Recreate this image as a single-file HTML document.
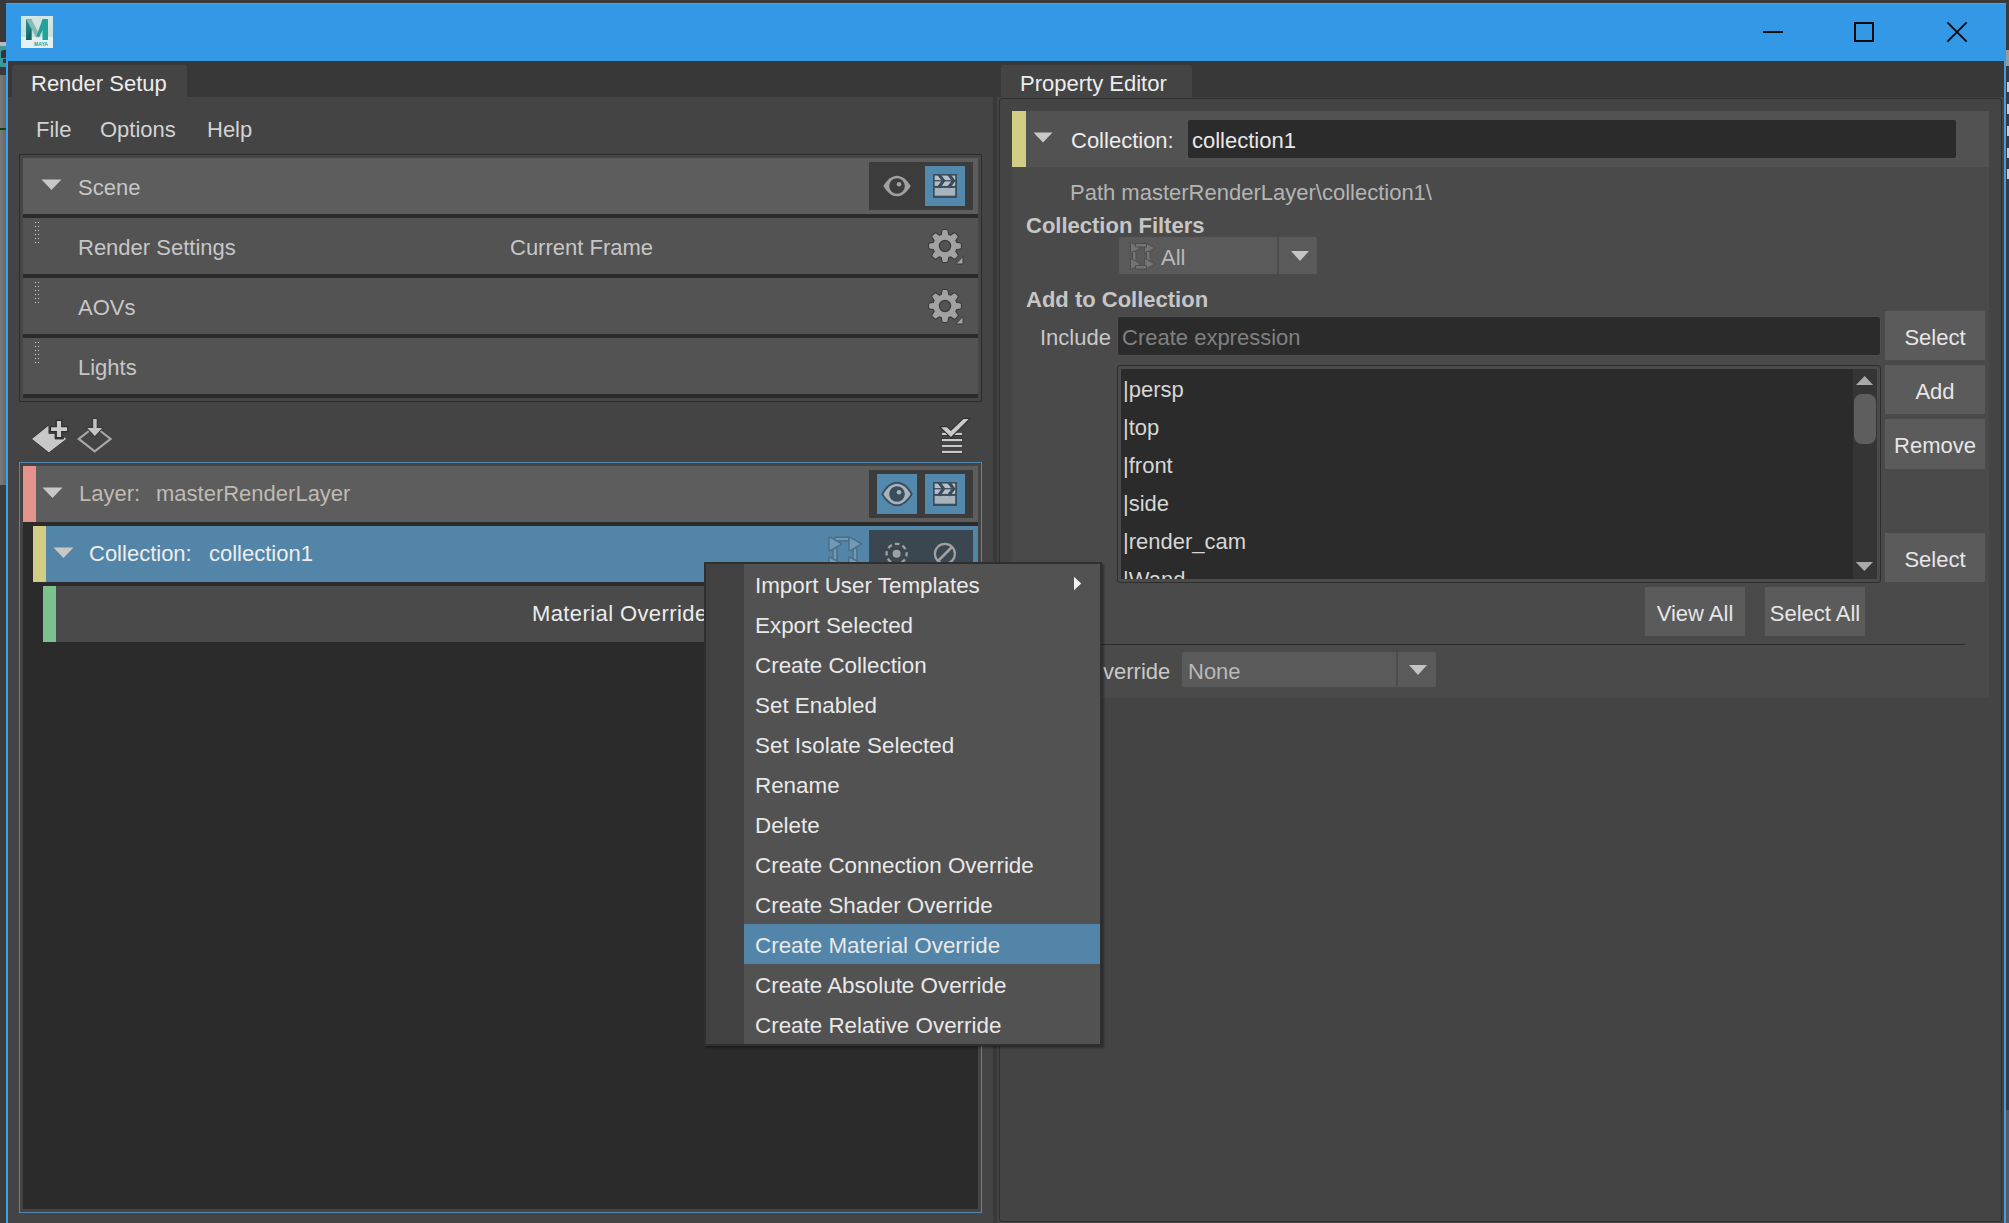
<!DOCTYPE html>
<html><head><meta charset="utf-8">
<style>
html,body{margin:0;padding:0}
body{width:2009px;height:1223px;position:relative;overflow:hidden;background:#3a3a3a;font-family:"Liberation Sans",sans-serif;}
.a{position:absolute}
.t{position:absolute;font-family:"Liberation Sans",sans-serif;font-size:22px;line-height:28px;white-space:nowrap;color:#d2d2d2}
.row{position:absolute;background:#535353}
.sep{position:absolute;background:#2b2b2b}
.btn{position:absolute;background:#5b5b5b;color:#e6e6e6;font-size:22px;line-height:26px;text-align:center;white-space:nowrap;box-sizing:border-box;padding-top:2px}
.mi{position:absolute;left:744px;width:356px;height:40px}
.mi span{position:absolute;left:11px;top:9px;font-size:22.4px;line-height:26px;color:#e8e8e8;white-space:nowrap}
.li{position:absolute;left:1123px;font-size:22px;line-height:26px;color:#d6d6d6;white-space:nowrap}
</style></head><body>
<!-- left desktop strip -->
<div class="a" style="left:0;top:0;width:6px;height:41px;background:#393939"></div>
<div class="a" style="left:0;top:42px;width:6px;height:4px;background:#b8b8b8"></div>
<div class="a" style="left:0;top:46px;width:6px;height:21px;background:#3d9898"></div>
<div class="a" style="left:1px;top:50px;width:5px;height:8px;background:#343434;border-radius:3px 0 0 0"></div>
<div class="a" style="left:3px;top:59px;width:3px;height:4px;background:#343434"></div>
<div class="a" style="left:0;top:67px;width:6px;height:8px;background:#3a3a3a"></div>
<div class="a" style="left:0;top:75px;width:6px;height:410px;background:linear-gradient(90deg,#7a7a7a,#686868)"></div>
<div class="a" style="left:0;top:128px;width:6px;height:2px;background:#0c4a0c"></div>
<div class="a" style="left:0;top:485px;width:6px;height:738px;background:#3b3b3b"></div>
<!-- right strip -->
<div class="a" style="left:2006px;top:0;width:3px;height:1223px;background:#3a3a3a"></div>
<div class="a" style="left:2006px;top:50px;width:3px;height:16px;background:#9a9a9a"></div>
<div class="a" style="left:2007px;top:82px;width:2px;height:10px;background:#cfcfcf"></div>
<div class="a" style="left:2007px;top:104px;width:2px;height:10px;background:#cfcfcf"></div>
<div class="a" style="left:2007px;top:126px;width:2px;height:10px;background:#cfcfcf"></div>
<div class="a" style="left:2007px;top:148px;width:2px;height:10px;background:#cfcfcf"></div>
<div class="a" style="left:2007px;top:169px;width:2px;height:10px;background:#cfcfcf"></div>
<div class="a" style="left:2006px;top:1110px;width:3px;height:113px;background:#5a5a5a"></div>
<!-- window blue frame -->
<div class="a" style="left:6px;top:3px;width:2000px;height:58px;background:#3399e6"></div>
<div class="a" style="left:6px;top:3px;width:2000px;height:1px;background:#4aa6ee"></div>
<div class="a" style="left:6px;top:61px;width:2px;height:1162px;background:#3da0ee"></div>
<div class="a" style="left:2004px;top:61px;width:2px;height:1162px;background:#3da0ee"></div>
<!-- content bg -->
<div class="a" style="left:8px;top:61px;width:1996px;height:1162px;background:#444444"></div>
<div class="a" style="left:8px;top:61px;width:1996px;height:36px;background:#383838"></div>
<!-- logo -->
<svg class="a" style="left:21px;top:16px" width="32" height="32" viewBox="0 0 32 32">
<defs><linearGradient id="lg1" x1="0" y1="0" x2="0" y2="1"><stop offset="0" stop-color="#d2e6e5"/><stop offset="0.65" stop-color="#c9e0df"/><stop offset="0.66" stop-color="#e4f0ef"/><stop offset="1" stop-color="#e6f1f0"/></linearGradient>
<linearGradient id="lg2" x1="0" y1="0" x2="0" y2="1"><stop offset="0" stop-color="#22928f"/><stop offset="1" stop-color="#146c6a"/></linearGradient></defs>
<rect x="0" y="0" width="32" height="32" fill="url(#lg1)"/>
<path d="M5 3.2 L10.5 3.2 L10.5 24 L5 24 Z" fill="url(#lg2)"/>
<path d="M5 3.2 L10.5 3.2 L19 19.5 L15.5 22 Z" fill="#88b8b8"/>
<path d="M21.5 3.2 L27 3.2 L18 21.5 L15.5 20 Z" fill="#2a9e9a"/>
<path d="M21.5 3.2 L27 3.2 L27 24 L21.5 24 Z" fill="#23a19d"/>
<path d="M5 24 L10.5 12 L10.5 24 Z" fill="#12605e" opacity="0.7"/>
<text x="20" y="29.6" font-family="Liberation Sans" font-size="5" font-weight="bold" fill="#2a9c98" text-anchor="middle">MAYA</text>
</svg>
<!-- window controls -->
<div class="a" style="left:1763px;top:31px;width:20px;height:2px;background:#111"></div>
<svg class="a" style="left:1853px;top:21px" width="23" height="23" viewBox="0 0 23 23"><rect x="2" y="2" width="18" height="18" fill="none" stroke="#0a0a0a" stroke-width="2"/></svg>
<svg class="a" style="left:1945px;top:20px" width="24" height="24" viewBox="0 0 24 24"><path d="M2.4 2.4 L21.6 21.6 M21.6 2.4 L2.4 21.6" stroke="#0a0a0a" stroke-width="1.9"/></svg>
<!-- tabs -->
<div class="a" style="left:12px;top:65px;width:175px;height:32px;background:#444444;border-radius:3px 3px 0 0"></div>
<div class="t" style="left:31px;top:70px;color:#ececec">Render Setup</div>
<div class="a" style="left:1001px;top:65px;width:191px;height:32px;background:#444444;border-radius:3px 3px 0 0"></div>
<div class="t" style="left:1020px;top:70px;color:#ececec">Property Editor</div>
<!-- splitter -->
<div class="a" style="left:993px;top:97px;width:4px;height:1126px;background:#393939"></div>
<!-- menu bar -->
<div class="t" style="left:36px;top:116px;color:#d2d2d2">File</div>
<div class="t" style="left:100px;top:116px;color:#d2d2d2">Options</div>
<div class="t" style="left:207px;top:116px;color:#d2d2d2">Help</div>
<!-- scene list frame -->
<div class="a" style="left:19px;top:154px;width:961px;height:246px;border:1px solid #2d2d2d;background:#464646"></div>
<div class="row" style="left:23px;top:158px;width:955px;height:56px;background:#5d5d5d"></div>
<div class="sep" style="left:23px;top:214px;width:955px;height:4px"></div>
<div class="row" style="left:23px;top:218px;width:955px;height:56px"></div>
<div class="sep" style="left:23px;top:274px;width:955px;height:4px"></div>
<div class="row" style="left:23px;top:278px;width:955px;height:56px"></div>
<div class="sep" style="left:23px;top:334px;width:955px;height:4px"></div>
<div class="row" style="left:23px;top:338px;width:955px;height:56px"></div>
<div class="sep" style="left:23px;top:394px;width:955px;height:4px"></div>
<!-- scene row content -->
<svg class="a" style="left:41px;top:179px" width="21" height="12" viewBox="0 0 21 12"><path d="M0.5 0.5 L20.5 0.5 L10.5 11 Z" fill="#c8c8c8"/></svg>
<div class="t" style="left:78px;top:174px;color:#c6c6c6">Scene</div>
<div class="a" style="left:869px;top:162px;width:104px;height:48px;background:#3c3c3c"></div>
<svg class="a" style="left:881px;top:173px" width="32" height="26" viewBox="0 0 32 26">
<path d="M2.3 13 C10.5 -0.8, 21.5 -0.8, 29.7 13 C21.5 26.8, 10.5 26.8, 2.3 13 Z" fill="#a0a0a0" stroke="#383838" stroke-width="1" paint-order="stroke"/>
<circle cx="16" cy="13" r="7.8" fill="#3c3c3c"/>
<circle cx="18" cy="11.2" r="2.3" fill="#a0a0a0"/>
</svg>
<div class="a" style="left:925px;top:166px;width:40px;height:40px;background:#5289ad"></div>
<svg class="a" style="left:933px;top:174px" width="24" height="24" viewBox="0 0 24 24">
<rect x="0" y="0" width="24" height="24" fill="#3b4c5a"/>
<rect x="1.7" y="13.9" width="20.5" height="7.8" fill="#a6b4be"/>
<rect x="1.7" y="1.6" width="20.5" height="10.3" fill="#b3c1ca"/>
<path d="M5.6 0 L10.6 6.75 L5.6 13.5 M15.6 0 L20.6 6.75 L15.6 13.5" fill="none" stroke="#3b4c5a" stroke-width="3.1"/>
<rect x="1" y="6.1" width="22" height="1.3" fill="#3b4c5a"/>
</svg>
<!-- render settings row -->
<div class="t" style="left:78px;top:234px;color:#c6c6c6">Render Settings</div>
<div class="t" style="left:510px;top:234px;color:#c6c6c6">Current Frame</div>
<div class="t" style="left:78px;top:294px;color:#c6c6c6">AOVs</div>
<div class="t" style="left:78px;top:354px;color:#c6c6c6">Lights</div>
<!-- gears -->
<svg class="a" style="left:927px;top:228px" width="40" height="40" viewBox="0 0 40 40">
<g fill="#383838" stroke="#383838" stroke-width="2" stroke-linejoin="round"><circle cx="18" cy="18" r="11.6"/><path d="M14.70 7.50 L15.50 2.70 L16.10 2.10 L19.90 2.10 L20.50 2.70 L21.30 7.50 Z M23.09 8.24 L27.05 5.41 L27.90 5.41 L30.59 8.10 L30.59 8.95 L27.76 12.91 Z M28.50 14.70 L33.30 15.50 L33.90 16.10 L33.90 19.90 L33.30 20.50 L28.50 21.30 Z M27.76 23.09 L30.59 27.05 L30.59 27.90 L27.90 30.59 L27.05 30.59 L23.09 27.76 Z M21.30 28.50 L20.50 33.30 L19.90 33.90 L16.10 33.90 L15.50 33.30 L14.70 28.50 Z M12.91 27.76 L8.95 30.59 L8.10 30.59 L5.41 27.90 L5.41 27.05 L8.24 23.09 Z M7.50 21.30 L2.70 20.50 L2.10 19.90 L2.10 16.10 L2.70 15.50 L7.50 14.70 Z M8.24 12.91 L5.41 8.95 L5.41 8.10 L8.10 5.41 L8.95 5.41 L12.91 8.24 Z"/></g>
<g fill="#a2a2a2"><circle cx="18" cy="18" r="11.6"/><path d="M14.70 7.50 L15.50 2.70 L16.10 2.10 L19.90 2.10 L20.50 2.70 L21.30 7.50 Z M23.09 8.24 L27.05 5.41 L27.90 5.41 L30.59 8.10 L30.59 8.95 L27.76 12.91 Z M28.50 14.70 L33.30 15.50 L33.90 16.10 L33.90 19.90 L33.30 20.50 L28.50 21.30 Z M27.76 23.09 L30.59 27.05 L30.59 27.90 L27.90 30.59 L27.05 30.59 L23.09 27.76 Z M21.30 28.50 L20.50 33.30 L19.90 33.90 L16.10 33.90 L15.50 33.30 L14.70 28.50 Z M12.91 27.76 L8.95 30.59 L8.10 30.59 L5.41 27.90 L5.41 27.05 L8.24 23.09 Z M7.50 21.30 L2.70 20.50 L2.10 19.90 L2.10 16.10 L2.70 15.50 L7.50 14.70 Z M8.24 12.91 L5.41 8.95 L5.41 8.10 L8.10 5.41 L8.95 5.41 L12.91 8.24 Z"/></g>
<circle cx="18" cy="18" r="5.6" fill="#535353" stroke="#3a3a3a" stroke-width="1.2"/>
<path d="M36 28.5 L36 36 L28.7 36 Z" fill="#a2a2a2" stroke="#3a3a3a" stroke-width="1"/>
</svg>
<svg class="a" style="left:927px;top:288px" width="40" height="40" viewBox="0 0 40 40">
<g fill="#383838" stroke="#383838" stroke-width="2" stroke-linejoin="round"><circle cx="18" cy="18" r="11.6"/><path d="M14.70 7.50 L15.50 2.70 L16.10 2.10 L19.90 2.10 L20.50 2.70 L21.30 7.50 Z M23.09 8.24 L27.05 5.41 L27.90 5.41 L30.59 8.10 L30.59 8.95 L27.76 12.91 Z M28.50 14.70 L33.30 15.50 L33.90 16.10 L33.90 19.90 L33.30 20.50 L28.50 21.30 Z M27.76 23.09 L30.59 27.05 L30.59 27.90 L27.90 30.59 L27.05 30.59 L23.09 27.76 Z M21.30 28.50 L20.50 33.30 L19.90 33.90 L16.10 33.90 L15.50 33.30 L14.70 28.50 Z M12.91 27.76 L8.95 30.59 L8.10 30.59 L5.41 27.90 L5.41 27.05 L8.24 23.09 Z M7.50 21.30 L2.70 20.50 L2.10 19.90 L2.10 16.10 L2.70 15.50 L7.50 14.70 Z M8.24 12.91 L5.41 8.95 L5.41 8.10 L8.10 5.41 L8.95 5.41 L12.91 8.24 Z"/></g>
<g fill="#a2a2a2"><circle cx="18" cy="18" r="11.6"/><path d="M14.70 7.50 L15.50 2.70 L16.10 2.10 L19.90 2.10 L20.50 2.70 L21.30 7.50 Z M23.09 8.24 L27.05 5.41 L27.90 5.41 L30.59 8.10 L30.59 8.95 L27.76 12.91 Z M28.50 14.70 L33.30 15.50 L33.90 16.10 L33.90 19.90 L33.30 20.50 L28.50 21.30 Z M27.76 23.09 L30.59 27.05 L30.59 27.90 L27.90 30.59 L27.05 30.59 L23.09 27.76 Z M21.30 28.50 L20.50 33.30 L19.90 33.90 L16.10 33.90 L15.50 33.30 L14.70 28.50 Z M12.91 27.76 L8.95 30.59 L8.10 30.59 L5.41 27.90 L5.41 27.05 L8.24 23.09 Z M7.50 21.30 L2.70 20.50 L2.10 19.90 L2.10 16.10 L2.70 15.50 L7.50 14.70 Z M8.24 12.91 L5.41 8.95 L5.41 8.10 L8.10 5.41 L8.95 5.41 L12.91 8.24 Z"/></g>
<circle cx="18" cy="18" r="5.6" fill="#535353" stroke="#3a3a3a" stroke-width="1.2"/>
<path d="M36 28.5 L36 36 L28.7 36 Z" fill="#a2a2a2" stroke="#3a3a3a" stroke-width="1"/>
</svg>
<!-- drag handles -->
<svg class="a" style="left:35px;top:222px" width="4" height="21" viewBox="0 0 4 21" shape-rendering="crispEdges"><g fill="#cfcfcf"><rect x="0" y="0" width="1" height="1"/><rect x="3" y="0" width="1" height="1"/><rect x="0" y="4" width="1" height="1"/><rect x="3" y="4" width="1" height="1"/><rect x="0" y="8" width="1" height="1"/><rect x="3" y="8" width="1" height="1"/><rect x="0" y="12" width="1" height="1"/><rect x="3" y="12" width="1" height="1"/><rect x="0" y="16" width="1" height="1"/><rect x="3" y="16" width="1" height="1"/><rect x="0" y="20" width="1" height="1"/><rect x="3" y="20" width="1" height="1"/></g></svg>
<svg class="a" style="left:35px;top:282px" width="4" height="21" viewBox="0 0 4 21" shape-rendering="crispEdges"><g fill="#cfcfcf"><rect x="0" y="0" width="1" height="1"/><rect x="3" y="0" width="1" height="1"/><rect x="0" y="4" width="1" height="1"/><rect x="3" y="4" width="1" height="1"/><rect x="0" y="8" width="1" height="1"/><rect x="3" y="8" width="1" height="1"/><rect x="0" y="12" width="1" height="1"/><rect x="3" y="12" width="1" height="1"/><rect x="0" y="16" width="1" height="1"/><rect x="3" y="16" width="1" height="1"/><rect x="0" y="20" width="1" height="1"/><rect x="3" y="20" width="1" height="1"/></g></svg>
<svg class="a" style="left:35px;top:342px" width="4" height="21" viewBox="0 0 4 21" shape-rendering="crispEdges"><g fill="#cfcfcf"><rect x="0" y="0" width="1" height="1"/><rect x="3" y="0" width="1" height="1"/><rect x="0" y="4" width="1" height="1"/><rect x="3" y="4" width="1" height="1"/><rect x="0" y="8" width="1" height="1"/><rect x="3" y="8" width="1" height="1"/><rect x="0" y="12" width="1" height="1"/><rect x="3" y="12" width="1" height="1"/><rect x="0" y="16" width="1" height="1"/><rect x="3" y="16" width="1" height="1"/><rect x="0" y="20" width="1" height="1"/><rect x="3" y="20" width="1" height="1"/></g></svg>
<!-- toolbar icons -->
<svg class="a" style="left:28px;top:417px" width="44" height="40" viewBox="28 417 44 40">
<path d="M31.5 438.9 L48.9 424.9 L48.9 433.5 L55 433.5 L55 439 L63.5 439 L63.5 436.2 L66.8 438.9 L48.9 452.8 Z" fill="#c8c8c8" stroke="#2e2e2e" stroke-width="0.8" stroke-linejoin="round"/>
<path d="M56.9 421 L61.1 421 L61.1 427.2 L67.1 427.2 L67.1 430.9 L61.1 430.9 L61.1 437.1 L56.9 437.1 L56.9 430.9 L51.1 430.9 L51.1 427.2 L56.9 427.2 Z" fill="#cbcbcb" stroke="#2e2e2e" stroke-width="2.6" paint-order="stroke"/>
</svg>
<svg class="a" style="left:74px;top:417px" width="42" height="40" viewBox="74 417 42 40">
<path d="M78.8 438.9 L94.7 426.5 L110.6 438.9 L94.7 451.3 Z" fill="none" stroke="#a8a8a8" stroke-width="2.1"/>
<path d="M93.2 419 L96.7 419 L96.7 428 L102.2 428 L94.9 436 L87.2 428 L93.2 428 Z" fill="#c4c4c4" stroke="#383838" stroke-width="2" paint-order="stroke"/>
</svg>
<svg class="a" style="left:936px;top:414px" width="36" height="44" viewBox="936 414 36 44">
<g fill="#cacaca" stroke="#2e2e2e" stroke-width="1.2" paint-order="stroke">
<rect x="941.9" y="444.9" width="20.2" height="2.2"/>
<rect x="941.9" y="439" width="20.2" height="2.2"/>
<rect x="941.9" y="450.8" width="20.2" height="2.2"/>
<rect x="941.9" y="432.8" width="20.2" height="2.2"/>
<path d="M941 427.2 L946.8 427.2 L950.9 431 L963.5 419 L968.8 419 L950.9 437 Z" stroke-width="2"/>
</g>
</svg>
<!-- layer list -->
<div class="a" style="left:19px;top:462px;width:961px;height:749px;border:1px solid #5289b0;background:#444444"></div>
<div class="a" style="left:23px;top:466px;width:955px;height:743px;background:#2b2b2b"></div>
<!-- layer row -->
<div class="row" style="left:23px;top:466px;width:955px;height:56px;background:#5d5d5d"></div>
<div class="a" style="left:23px;top:466px;width:13px;height:56px;background:#e4928c"></div>
<svg class="a" style="left:42px;top:487px" width="21" height="12" viewBox="0 0 21 12"><path d="M0.5 0.5 L20.5 0.5 L10.5 11 Z" fill="#c8c8c8"/></svg>
<div class="t" style="left:79px;top:480px;color:#c0bab2">Layer:</div>
<div class="t" style="left:156px;top:480px;color:#c0bab2">masterRenderLayer</div>
<div class="a" style="left:869px;top:470px;width:104px;height:48px;background:#3c3c3c"></div>
<div class="a" style="left:877px;top:474px;width:40px;height:40px;background:#5289ad"></div>
<svg class="a" style="left:881px;top:481px" width="32" height="26" viewBox="0 0 32 26">
<path d="M2.3 13 C10.5 -0.8, 21.5 -0.8, 29.7 13 C21.5 26.8, 10.5 26.8, 2.3 13 Z" fill="#a6b4be" stroke="#3b4c5a" stroke-width="3.6" stroke-linejoin="round" paint-order="stroke"/>
<circle cx="16" cy="13" r="7.8" fill="#3b4c5a"/>
<circle cx="18" cy="11.2" r="2.3" fill="#a6b4be"/>
</svg>
<div class="a" style="left:925px;top:474px;width:40px;height:40px;background:#5289ad"></div>
<svg class="a" style="left:933px;top:482px" width="24" height="24" viewBox="0 0 24 24">
<rect x="0" y="0" width="24" height="24" fill="#3b4c5a"/>
<rect x="1.7" y="13.9" width="20.5" height="7.8" fill="#a6b4be"/>
<rect x="1.7" y="1.6" width="20.5" height="10.3" fill="#b3c1ca"/>
<path d="M5.6 0 L10.6 6.75 L5.6 13.5 M15.6 0 L20.6 6.75 L15.6 13.5" fill="none" stroke="#3b4c5a" stroke-width="3.1"/>
<rect x="1" y="6.1" width="22" height="1.3" fill="#3b4c5a"/>
</svg>
<!-- collection row -->
<div class="row" style="left:33px;top:526px;width:945px;height:56px;background:#5385a8"></div>
<div class="a" style="left:33px;top:526px;width:13px;height:56px;background:#d1cd85"></div>
<svg class="a" style="left:53px;top:547px" width="21" height="12" viewBox="0 0 21 12"><path d="M0.5 0.5 L20.5 0.5 L10.5 11 Z" fill="#c8c8c8"/></svg>
<div class="t" style="left:89px;top:540px;color:#ededed">Collection:</div>
<div class="t" style="left:209px;top:540px;color:#ededed">collection1</div>
<div class="a" style="left:869px;top:530px;width:104px;height:48px;background:#3a4751"></div>
<svg class="a" style="left:820px;top:528px" width="50" height="34" viewBox="820 528 50 34">
<g fill="#7299b5" stroke="#4a6f8a" stroke-width="3" stroke-linejoin="round" paint-order="stroke">
<rect x="835.6" y="538" width="13" height="2"/>
<rect x="833.8" y="548.6" width="2.4" height="11"/>
<rect x="853.8" y="548.6" width="2.4" height="11"/>
<path d="M829.7 537.7 L840.6 543.9 L829.7 550.1 Z"/>
<path d="M849.7 538 L860.3 543.9 L849.7 549.9 Z"/>
<path d="M829.7 557.7 L840.6 563.9 L829.7 570.1 Z"/>
<path d="M849.7 557.7 L860.3 563.9 L849.7 570.1 Z"/>
</g>
</svg>
<svg class="a" style="left:883px;top:540px" width="28" height="28" viewBox="0 0 28 28">
<circle cx="13.6" cy="13.8" r="10" fill="none" stroke="#a0a0a0" stroke-width="2.3" stroke-dasharray="4.6 3.25" stroke-dashoffset="2"/>
<circle cx="13.6" cy="13.8" r="4" fill="#a0a0a0"/>
</svg>
<svg class="a" style="left:931px;top:540px" width="28" height="28" viewBox="0 0 28 28">
<circle cx="13.9" cy="13.8" r="10" fill="none" stroke="#a0a0a0" stroke-width="2.2"/>
<path d="M7 21 L21 7" stroke="#a0a0a0" stroke-width="2.6"/>
</svg>
<!-- material override row -->
<div class="row" style="left:43px;top:586px;width:935px;height:56px;background:#4a4a4a"></div>
<div class="a" style="left:43px;top:586px;width:13px;height:56px;background:#7cc28f"></div>
<div class="t" style="left:532px;top:600px;color:#ececec;letter-spacing:0.4px">Material Override</div>
<!-- property editor frame -->
<div class="a" style="left:999px;top:98px;width:1001px;height:1122px;border:1px solid #2e2e2e;border-radius:3px;background:#444444"></div>
<!-- header -->
<div class="a" style="left:1012px;top:111px;width:977px;height:56px;background:#525252"></div>
<div class="a" style="left:1012px;top:111px;width:14px;height:56px;background:#d1cd85"></div>
<svg class="a" style="left:1033px;top:132px" width="21" height="12" viewBox="0 0 21 12"><path d="M0.5 0.5 L19.5 0.5 L10 10.5 Z" fill="#c8c8c8"/></svg>
<div class="t" style="left:1071px;top:127px;color:#ececec">Collection:</div>
<div class="a" style="left:1188px;top:120px;width:768px;height:38px;background:#2b2b2b;border-radius:2px"></div>
<div class="t" style="left:1192px;top:127px;color:#e8e8e8">collection1</div>
<!-- content -->
<div class="a" style="left:1012px;top:167px;width:977px;height:531px;background:#4a4a4a"></div>
<div class="t" style="left:1070px;top:179px;color:#b4b4b4">Path masterRenderLayer\collection1\</div>
<div class="t" style="left:1026px;top:212px;color:#c6c6c6;font-weight:bold">Collection Filters</div>
<div class="a" style="left:1119px;top:237px;width:198px;height:37px;background:#5a5a5a;border-radius:2px"></div>
<div class="a" style="left:1277px;top:237px;width:2px;height:37px;background:#4c4c4c"></div>
<svg class="a" style="left:1290px;top:250px" width="21" height="12" viewBox="0 0 21 12"><path d="M1 1 L19 1 L10 11 Z" fill="#c4c4c4"/></svg>
<svg class="a" style="left:1128px;top:240px" width="30" height="32" viewBox="0 0 30 32">
<g fill="#747474" stroke="#4e4e4e" stroke-width="2" stroke-linejoin="round" paint-order="stroke">
<path d="M3 3 L12 8 L3 13 Z"/><path d="M17 3 L26 8 L17 13 Z"/>
<rect x="8" y="4" width="10" height="2.5"/>
<rect x="5" y="12" width="2.5" height="10"/><rect x="19" y="12" width="2.5" height="10"/>
<path d="M3 19 L12 24 L3 29 Z"/><path d="M17 19 L26 24 L17 29 Z"/>
<rect x="8" y="26" width="10" height="2.5"/>
</g></svg>
<div class="t" style="left:1161px;top:244px;color:#b8b8b8">All</div>
<div class="t" style="left:1026px;top:286px;color:#c6c6c6;font-weight:bold">Add to Collection</div>
<div class="t" style="left:1040px;top:324px;color:#c8c8c8">Include</div>
<div class="a" style="left:1117px;top:316px;width:762px;height:38px;background:#2b2b2b;border:1px solid #505050;border-radius:3px"></div>
<div class="t" style="left:1122px;top:324px;color:#808080">Create expression</div>
<!-- list box -->
<div class="a" style="left:1117px;top:365px;width:762px;height:216px;background:#4b4b4b;border:1px solid #2d2d2d;border-radius:3px"></div>
<div class="a" style="left:1121px;top:369px;width:732px;height:210px;background:#2b2b2b;overflow:hidden">
<div class="li" style="left:2px;top:8px">|persp</div>
<div class="li" style="left:2px;top:46px">|top</div>
<div class="li" style="left:2px;top:84px">|front</div>
<div class="li" style="left:2px;top:122px">|side</div>
<div class="li" style="left:2px;top:160px">|render_cam</div>
<div class="li" style="left:2px;top:198px">|Wand</div>
</div>
<div class="a" style="left:1853px;top:369px;width:24px;height:210px;background:#353535"></div>
<svg class="a" style="left:1855px;top:375px" width="20" height="12" viewBox="0 0 20 12"><path d="M9.6 1 L18.2 10 L1 10 Z" fill="#aaaaaa"/></svg>
<div class="a" style="left:1854px;top:394px;width:22px;height:50px;background:#5e5e5e;border-radius:8px"></div>
<svg class="a" style="left:1855px;top:560px" width="20" height="12" viewBox="0 0 20 12"><path d="M0.7 2 L18 2 L9.4 11 Z" fill="#aaaaaa"/></svg>
<!-- buttons -->
<div class="btn" style="left:1885px;top:311px;width:100px;height:49px;line-height:49px">Select</div>
<div class="btn" style="left:1885px;top:365px;width:100px;height:49px;line-height:49px">Add</div>
<div class="btn" style="left:1885px;top:419px;width:100px;height:50px;line-height:50px">Remove</div>
<div class="btn" style="left:1885px;top:533px;width:100px;height:49px;line-height:49px">Select</div>
<div class="btn" style="left:1645px;top:587px;width:100px;height:49px;line-height:49px">View All</div>
<div class="btn" style="left:1765px;top:587px;width:100px;height:49px;line-height:49px">Select All</div>
<div class="a" style="left:1012px;top:644px;width:953px;height:1px;background:#2c2c2c"></div>
<div class="t" style="left:1103px;top:658px;color:#c8c8c8">verride</div>
<div class="a" style="left:1182px;top:652px;width:254px;height:35px;background:#5a5a5a;border-radius:2px"></div>
<div class="a" style="left:1396px;top:652px;width:2px;height:35px;background:#4c4c4c"></div>
<svg class="a" style="left:1408px;top:664px" width="21" height="12" viewBox="0 0 21 12"><path d="M1 1 L19 1 L10 11 Z" fill="#c4c4c4"/></svg>
<div class="t" style="left:1188px;top:658px;color:#b8b8b8">None</div>
<!-- context menu -->
<div class="a" style="left:704px;top:562px;width:394px;height:480px;border:2px solid #2f2f2f;background:#525252;box-shadow:2px 2px 2px rgba(0,0,0,0.35)"></div>
<div class="a" style="left:706px;top:564px;width:38px;height:480px;background:#414141"></div>
<div class="mi" style="top:924px;background:#5285a8"></div>
<div class="mi" style="top:564px"><span>Import User Templates</span></div>
<svg class="a" style="left:1073px;top:576px" width="10" height="15" viewBox="0 0 10 15"><path d="M1 0.7 L8.2 7.5 L1 14.3 Z" fill="#f0f0f0"/></svg>
<div class="mi" style="top:604px"><span>Export Selected</span></div>
<div class="mi" style="top:644px"><span>Create Collection</span></div>
<div class="mi" style="top:684px"><span>Set Enabled</span></div>
<div class="mi" style="top:724px"><span>Set Isolate Selected</span></div>
<div class="mi" style="top:764px"><span>Rename</span></div>
<div class="mi" style="top:804px"><span>Delete</span></div>
<div class="mi" style="top:844px"><span>Create Connection Override</span></div>
<div class="mi" style="top:884px"><span>Create Shader Override</span></div>
<div class="mi" style="top:924px"><span>Create Material Override</span></div>
<div class="mi" style="top:964px"><span>Create Absolute Override</span></div>
<div class="mi" style="top:1004px"><span>Create Relative Override</span></div>
</body></html>
